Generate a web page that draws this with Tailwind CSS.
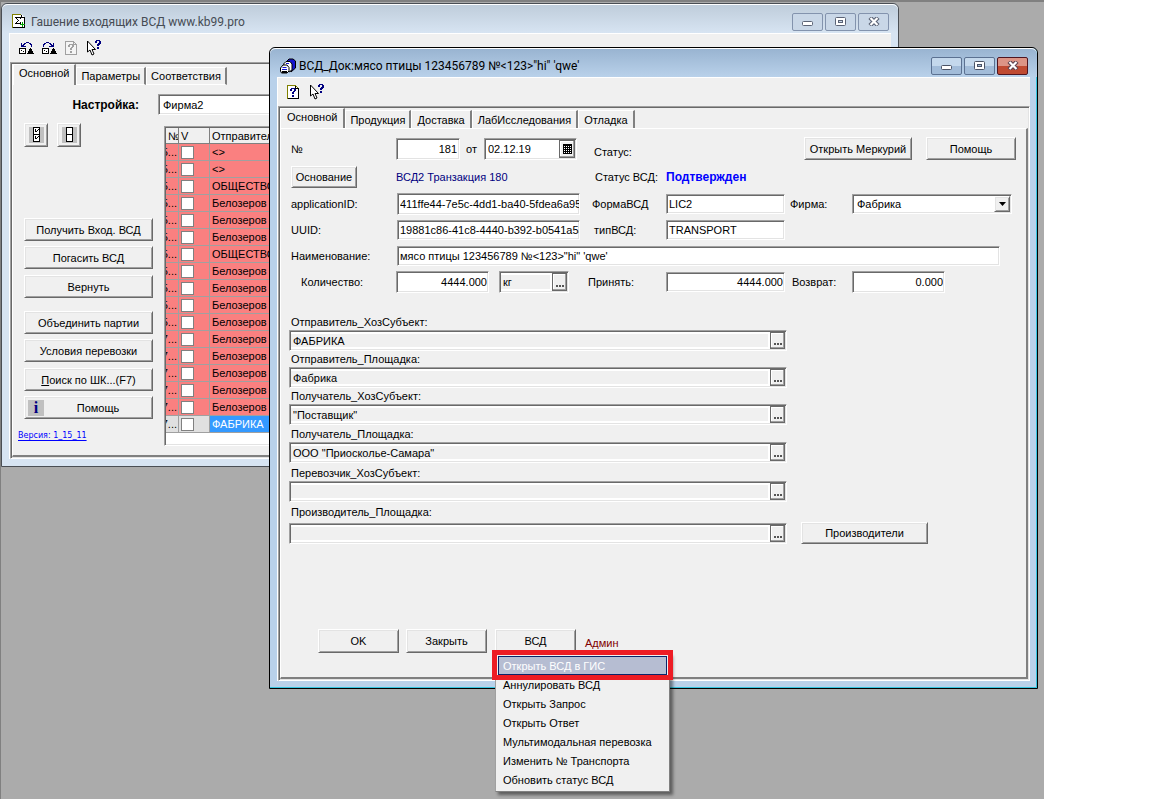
<!DOCTYPE html>
<html lang="ru">
<head>
<meta charset="utf-8">
<title>Гашение входящих ВСД</title>
<script src="https://cdn.jsdelivr.net/npm/@tailwindcss/browser@4"></script>
</head>
<body class="bg-white font-['Liberation_Sans',sans-serif] text-[11px] leading-4 text-black
 [&_.raised]:border [&_.raised]:border-t-white [&_.raised]:border-l-white [&_.raised]:border-r-[#696969] [&_.raised]:border-b-[#696969] [&_.raised]:bg-[#f0f0f0] [&_.raised]:shadow-[inset_1px_1px_#e3e3e3,inset_-1px_-1px_#a0a0a0]
 [&_.sunken]:border [&_.sunken]:border-t-[#a0a0a0] [&_.sunken]:border-l-[#a0a0a0] [&_.sunken]:border-r-white [&_.sunken]:border-b-white [&_.sunken]:shadow-[inset_1px_1px_#696969,inset_-1px_-1px_#e3e3e3]
 [&_.tab]:h-[18px] [&_.tab]:border-t [&_.tab]:border-r-2 [&_.tab]:border-t-white [&_.tab]:border-r-[#808080] [&_.tab]:border-l [&_.tab]:border-l-white [&_.tab]:px-1 [&_.tab]:whitespace-nowrap
 [&_.dots]:relative [&_.dots]:flex [&_.dots]:w-[15px] [&_.dots]:items-end [&_.dots]:justify-center [&_.dots]:gap-px [&_.dots]:border [&_.dots]:border-[#696969] [&_.dots]:pb-[3px] [&_.dots]:shadow-[inset_-1px_-1px_#a0a0a0,inset_1px_1px_#fff] [&_.dots]:bg-[#f0f0f0] [&_.dots>i]:h-0.5 [&_.dots>i]:w-0.5 [&_.dots>i]:bg-[#555]
 [&_.cap]:flex [&_.cap]:h-[18px] [&_.cap]:w-[31px] [&_.cap]:items-center [&_.cap]:justify-center [&_.cap]:rounded-[2px] [&_.cap]:border">
<main class="relative mr-[108px] min-h-screen overflow-hidden border-t-2 border-l border-t-[#808080] border-l-[#808080] bg-[#ababab]">

  <!-- Parent window -->
  <section class="absolute top-px left-0 w-[898px] rounded-t-md border border-[#4a4e54] bg-[#d7e4f2] px-[7px] pb-[7px]">
    <header class="-mx-[7px] flex h-[29px] items-center rounded-t-md border-t border-white bg-linear-to-b from-[#bfcddb] to-[#d7e4f2] pt-[5px] pr-[9px] pl-[10px]">
      <svg class="mr-[5px] h-[15px] w-[14px]" viewBox="0 0 14 15" shape-rendering="crispEdges"><path d="M.5.5h9l3 3v10H.5z" fill="#fff"/><path d="M9 .5H.5v13" fill="none" stroke="#808000"/><path d="M9.500.5v3h3v10H1" fill="none" stroke="#000"/><path d="M3 3h6v2H8V4H5v1h1v1h1v1H6v1H5v1h3V8h1v2H3V9h1V8h1V7h1V6H5V5H4V4H3z" fill="#000"/><path d="M8 10.500h5M10.500 8v5" stroke="#00a000"/></svg>
      <h1 class="flex-1 font-[Roboto,sans-serif] text-[12px] text-[#464c55]">Гашение входящих ВСД www.kb99.pro</h1>
      <div class="flex gap-[2px]">
        <button class="cap border-[#8393ad] bg-[#c9d7e7]" aria-label="Свернуть"><svg width="12" height="6" class="mt-[5px]"><rect x=".5" y=".5" width="10" height="4" rx="1" fill="#fff" stroke="#5b6375"/></svg></button>
        <button class="cap border-[#8393ad] bg-[#c9d7e7]" aria-label="Развернуть"><svg width="11" height="9"><rect x=".5" y=".5" width="10" height="8" rx="1" fill="#fff" stroke="#5b6375"/><rect x="3.500" y="3.500" width="4" height="2" fill="#c9d7e7" stroke="#5b6375"/></svg></button>
        <button class="cap border-[#8393ad] bg-[#c9d7e7]" aria-label="Закрыть"><svg width="12" height="9" viewBox="0 0 12 9"><path d="M2 .5l8 8M10 .5l-8 8" stroke="#5b6375" stroke-width="4.400"/><path d="M2.500 1l7 7M9.500 1l-7 7" stroke="#fff" stroke-width="2.200"/></svg></button>
      </div>
    </header>
    <div class="border-t border-l border-white bg-[#f0f0f0]">
      <div class="flex h-7 items-center gap-[8px] pl-[9px]">
        <button aria-label="Назад"><svg width="15" height="13" viewBox="0 0 15 13" shape-rendering="crispEdges"><path d="M2 1h1v2h1V2h1V1h2V0h3v1h2v1h1v3h-1V3h-1V2h-1V1H7v1H6v1H5v1h2v1H2z" fill="#000080"/><rect x=".5" y="6.500" width="6" height="5" fill="#fff" stroke="#000"/><path d="M2 8h1v1H2zM4 9h1v1H4zM11 6h1v1h1v2h1v2h1v1H8v-1h1V9h1V7h1z"/></svg></button>
        <button aria-label="Вперёд"><svg width="15" height="13" viewBox="0 0 15 13" shape-rendering="crispEdges"><path d="M12 1h-1v2h-1V2H9V1H7V0H4v1H2v1H1v3h1V3h1V2h1V1h3v1h1v1h1v1H7v1h5z" fill="#000080"/><rect x=".5" y="6.500" width="6" height="5" fill="#fff" stroke="#000"/><path d="M2 8h1v1H2zM4 9h1v1H4zM11 6h1v1h1v2h1v2h1v1H8v-1h1V9h1V7h1z"/></svg></button>
        <button aria-label="Справка"><svg width="13" height="15" viewBox="0 0 13 15" shape-rendering="crispEdges"><path d="M.5.5h8l3 3v10H.5zM8.500.5v3h3" fill="#f4f4f4" stroke="#a0a0a0"/><path d="M3 4h1V3h4v1h1v2H8v1H7v2H5V7h1V6h1V4H5v2H3zM5 10h2v2H5z" fill="#a0a0a0"/></svg></button>
        <button aria-label="Что это?"><svg width="16" height="16" viewBox="0 0 16 16"><path d="M1.500 1v11l2.500-2 2 5 2-1-2-4.500h3.500z" fill="#fff" stroke="#000"/><path d="M9 1h1V0h4v1h1v3h-1v1h-1v1h-2V4h1V3h1V1h-2v2H9zM11 7h2v2h-2z" fill="#000080"/></svg></button>
      </div>
      <div class="sunken p-px">
        <div class="border-r-2 border-b-2 border-l border-r-[#808080] border-b-[#808080] border-l-white pb-[9px]">
          <nav class="flex h-[21px] items-end">
            <button class="tab !h-[21px] !px-[5px] pb-1">Основной</button>
            <button class="tab border-b border-b-white">Параметры</button>
            <button class="tab border-b border-b-white">Соответствия</button>
          </nav>
          <div class="mt-[9px] flex items-center">
            <label for="cfg" class="w-[145px] pr-[19px] text-right text-[12px] font-bold">Настройка:</label>
            <input id="cfg" value="Фирма2" class="sunken h-[21px] w-[400px] bg-white px-1">
          </div>
          <div class="mt-[11px] flex">
            <div class="flex w-[151px] flex-col items-start pl-[11px] [&>button]:h-[23px] [&>button]:w-[129px]">
              <div class="mt-[-3px] mb-[71px] flex gap-[9px]">
                <button class="raised flex h-6 w-6 items-center justify-center" aria-label="Отметить все"><svg width="15" height="16" shape-rendering="crispEdges"><path fill="#c0c0c0" d="M0 0h15v16H0z"/><path d="M4.500.5h6v14h-6zM4 7.500h7" fill="#fff" stroke="#000"/><path d="M6 2h1v2h1V3h1V2h1v1H9v1H8v1H6zM6 9h1v2h1v-1h1V9h1v1H9v1H8v1H6z"/></svg></button>
                <button class="raised flex h-6 w-6 items-center justify-center" aria-label="Снять отметки"><svg width="15" height="16" shape-rendering="crispEdges"><path fill="#c0c0c0" d="M0 0h15v16H0z"/><path d="M4.500.5h6v14h-6zM4 7.500h7" fill="#fff" stroke="#000"/></svg></button>
              </div>
              <button class="raised mb-[5px]">Получить Вход. ВСД</button>
              <button class="raised mb-[6px]">Погасить ВСД</button>
              <button class="raised mb-[13px]">Вернуть</button>
              <button class="raised mb-[5px]">Объединить партии</button>
              <button class="raised mb-[6px]">Условия перевозки</button>
              <button class="raised mb-[5px]"><u>П</u>оиск по ШК...(F7)</button>
              <button class="raised flex items-center pl-[3px]"><span class="flex h-4 w-4 items-center justify-center bg-[#c0c0c0] font-['Liberation_Serif',serif] text-[16px] font-bold text-[#000080]">i</span><span class="flex-1">Помощь</span></button>
              <a href="#" class="mt-[9px] -ml-[6px] font-['DejaVu_Sans',sans-serif] text-[8px] text-[#0000ff] underline underline-offset-2">Версия: 1_15_11</a>
            </div>
            <div class="sunken h-[320px] flex-1 overflow-hidden bg-white p-px">
              <table class="w-full table-fixed border-separate border-spacing-0 [&_td]:h-[17px] [&_td]:border-r [&_td]:border-b [&_td]:border-[#a0a0a0] [&_td]:p-0 [&_th]:h-4 [&_th]:border-r [&_th]:border-b [&_th]:border-[#808080] [&_th]:bg-[#f0f0f0] [&_th]:p-0 [&_th]:text-left [&_th]:font-normal">
                <colgroup><col class="w-[13px]"><col class="w-[31px]"><col></colgroup>
                <thead><tr><th><div class="h-[15px] w-3 overflow-hidden pl-0.5">№</div></th><th><div class="h-[15px] pl-0.5">V</div></th><th><div class="h-[15px] pl-0.5">Отправитель</div></th></tr></thead>
                <tbody id="rows"></tbody>
              </table>
            </div>
          </div>
        </div>
      </div>
    </div>
  </section>

  <!-- Document window -->
  <section class="absolute top-[45px] left-[268px] w-[769px] rounded-t-md border border-black bg-[#b9d1ea] shadow-[inset_-1px_-1px_#35c5e0]">
    <header class="flex h-[29px] items-center rounded-t-md border-t border-white bg-linear-to-b from-[#99b4d1] to-[#b9d1ea] pt-[5px] pr-[9px] pl-[10px]">
      <svg class="mr-[3px] h-4 w-4" viewBox="0 0 16 16"><path d="M7 3l2-2h4l2.500 2v7L11 14l-2-4z" fill="#1414d0" stroke="#000"/><path d="M3.500 6L6 3.500h4l2 2.500v6l-3 2-3-4z" fill="#fff" stroke="#000"/><path d="M.5 10L3 7h4l2 2.500V13l-2 2H1.500L.5 13z" fill="#fff" stroke="#000"/><path d="M2.500 9.500h4M2 11.500h5M6 5.500h3M10 3h3" stroke="#1414d0"/><path d="M2 14h5" stroke="#000" stroke-width="2"/></svg>
      <h2 class="flex-1 font-[Roboto,sans-serif] text-[12px]">ВСД_Док:мясо птицы 123456789 №&lt;123&gt;"hi" 'qwe'</h2>
      <div class="flex gap-[2px]">
        <button class="cap border-[#5b7191] bg-linear-to-b from-[#c4d8ec] from-50% to-[#a2bcd9] to-50%" aria-label="Свернуть"><svg width="12" height="6" class="mt-[5px]"><rect x=".5" y=".5" width="10" height="4" rx="1" fill="#fff" stroke="#4b5365"/></svg></button>
        <button class="cap border-[#5b7191] bg-linear-to-b from-[#c4d8ec] from-50% to-[#a2bcd9] to-50%" aria-label="Развернуть"><svg width="11" height="9"><rect x=".5" y=".5" width="10" height="8" rx="1" fill="#fff" stroke="#4b5365"/><rect x="3.500" y="3.500" width="4" height="2" fill="#a2bcd9" stroke="#4b5365"/></svg></button>
        <button class="cap border-[#4f1520] bg-linear-to-b from-[#dc9486] from-50% to-[#bf4a32] to-50%" aria-label="Закрыть"><svg width="12" height="9" viewBox="0 0 12 9"><path d="M2 .5l8 8M10 .5l-8 8" stroke="#5b4350" stroke-width="4.400"/><path d="M2.500 1l7 7M9.500 1l-7 7" stroke="#fff" stroke-width="2.200"/></svg></button>
      </div>
    </header>
    <div class="mx-[7px] mb-[7px] border-t border-l border-white bg-[#f0f0f0]">
      <div class="flex h-7 items-center gap-[9px] pl-[9px]">
        <button aria-label="Справка"><svg width="13" height="15" viewBox="0 0 13 15" shape-rendering="crispEdges"><path d="M.5.5h8l3 3v10H.5z" fill="#fff" stroke="#808000"/><path d="M8.500.5v3h3v10H1" fill="none" stroke="#000"/><path d="M3 4h1V3h4v1h1v2H8v1H7v2H5V7h1V6h1V4H5v2H3zM5 10h2v2H5z" fill="#000080"/></svg></button>
        <button aria-label="Что это?"><svg width="16" height="16" viewBox="0 0 16 16"><path d="M1.500 1v11l2.500-2 2 5 2-1-2-4.500h3.500z" fill="#fff" stroke="#000"/><path d="M9 1h1V0h4v1h1v3h-1v1h-1v1h-2V4h1V3h1V1h-2v2H9zM11 7h2v2h-2z" fill="#000080"/></svg></button>
      </div>
      <div class="sunken p-px">
        <nav class="flex h-5 items-end">
          <button class="tab !h-5 !px-[6px] pb-1">Основной</button>
          <button class="tab">Продукция</button>
          <button class="tab !px-[5px]">Доставка</button>
          <button class="tab !px-[5px]">ЛабИсследования</button>
          <button class="tab !px-[5px]">Отладка</button>
        </nav>
        <form class="border-t border-r-2 border-b-2 border-l border-t-white border-r-[#808080] border-b-[#808080] border-l-white pt-[5px] pr-[8px] pb-6 pl-[10px]" onsubmit="return false">
          <div class="grid grid-cols-[105px_196px_74px_124px_62px_1fr] grid-rows-[29px_28px_26px_25px_27px_26px] items-center">
            <label for="num">№</label>
            <div class="flex items-center">
              <input id="num" value="181" class="sunken mr-[6px] h-[22px] w-16 bg-white pr-0.5 text-right">
              <label for="date" class="w-[18px]">от</label>
              <div class="sunken flex h-[22px] w-[93px] bg-white p-px">
                <input id="date" value="02.12.19" class="min-w-0 flex-1 pl-0.5">
                <button class="flex w-4 items-center justify-center border border-[#696969] bg-[#f0f0f0] shadow-[inset_-1px_-1px_#a0a0a0,inset_1px_1px_#fff]" aria-label="Календарь"><svg width="9" height="10" shape-rendering="crispEdges"><path d="M0 0h9v10H0z"/><path d="M1 2h1v1H1zM3 2h1v1H3zM5 2h1v1H5zM7 2h1v1H7zM1 4h1v1H1zM3 4h1v1H3zM5 4h1v1H5zM7 4h1v1H7zM1 6h1v1H1zM3 6h1v1H3zM5 6h1v1H5zM7 6h1v1H7zM1 8h1v1H1zM3 8h1v1H3zM5 8h1v1H5zM7 8h1v1H7z" fill="#fff"/></svg></button>
              </div>
            </div>
            <span class="pt-[6px] pl-[2px]">Статус:</span><span></span>
            <div class="col-span-2 flex justify-end gap-[14px] pr-[2px]">
              <button class="raised h-[23px] w-[108px] whitespace-nowrap">Открыть Меркурий</button>
              <button class="raised h-[23px] w-[90px]">Помощь</button>
            </div>

            <button class="raised h-[22px] w-[66px]">Основание</button>
            <span class="text-[#000080]">ВСД2 Транзакция 180</span>
            <span class="pl-[3px] whitespace-nowrap">Статус ВСД:</span>
            <span class="col-span-3 text-[12px] font-bold text-[#0000ff]">Подтвержден</span>

            <label for="app">applicationID:</label>
            <input id="app" value="411ffe44-7e5c-4dd1-ba40-5fdea6a95b10" class="sunken ml-px h-[22px] w-[183px] bg-white pl-0.5">
            <label for="form" class="w-[57px] overflow-hidden whitespace-nowrap">ФормаВСД:</label>
            <input id="form" value="LIC2" class="sunken h-5 w-[119px] bg-white px-0.5">
            <label for="firm">Фирма:</label>
            <div class="sunken relative h-5 w-[160px] bg-white">
              <select id="firm" class="h-full w-full appearance-none pl-1"><option>Фабрика</option></select>
              <span class="raised pointer-events-none absolute inset-y-px right-px flex w-4 items-center justify-center"><svg width="7" height="4"><path d="M0 0h7L3.500 4z"/></svg></span>
            </div>

            <label for="uuid">UUID:</label>
            <input id="uuid" value="19881c86-41c8-4440-b392-b0541a53c7e2" class="sunken ml-px h-5 w-[183px] bg-white pl-0.5">
            <label for="type" class="pl-[2px]">типВСД:</label>
            <input id="type" value="TRANSPORT" class="sunken h-5 w-[119px] bg-white px-0.5">
            <span class="col-span-2"></span>

            <label for="name">Наименование:</label>
            <input id="name" value="мясо птицы 123456789 №&lt;123&gt;&quot;hi&quot; 'qwe'" class="sunken col-span-5 mr-[18px] ml-px h-5 bg-white px-0.5">

            <label for="qty" class="pl-[10px]">Количество:</label>
            <div class="flex">
              <input id="qty" value="4444.000" class="sunken mr-[10px] h-[22px] w-[93px] bg-white pr-px text-right">
              <div class="sunken flex h-[22px] w-[70px] bg-white p-px">
                <input aria-label="Единица" value="кг" class="min-w-0 flex-1 border-2 border-l-0 border-white bg-[#f0f0f0] pl-0.5">
                <button class="dots" aria-label="Выбрать"><i></i><i></i><i></i></button>
              </div>
            </div>
            <label for="acc" class="-ml-1">Принять:</label>
            <input id="acc" value="4444.000" class="sunken h-5 w-[119px] bg-white pr-px text-right">
            <label for="ret" class="pl-[2px]">Возврат:</label>
            <input id="ret" value="0.000" class="sunken h-[22px] w-[93px] bg-white pr-px text-right">
          </div>

          <div class="mt-[19px] -ml-[2px] flex items-end gap-[14px]">
            <div id="lookups" class="flex w-[498px] flex-col"></div>
            <button class="raised h-[22px] w-[127px]">Производители</button>
          </div>

          <div class="mt-[85px] ml-[27px] flex items-center gap-[7px]">
            <button class="raised h-6 w-[81px]">OK</button>
            <button class="raised h-6 w-[81px]">Закрыть</button>
            <div class="relative ml-px">
              <button class="raised h-6 w-[81px]">ВСД</button>
              <menu class="absolute top-6 left-0 z-10 w-[175px] border border-t-[#a0a0a0] border-r-[#808080] border-b-[#808080] border-l-[#a0a0a0] bg-[#f0f0f0] p-0.5 shadow-[3px_3px_3px_rgba(0,0,0,0.45)] [&_button]:block [&_button]:h-[19px] [&_button]:w-full [&_button]:pl-[5px] [&_button]:text-left">
                <li><button class="relative border border-[#0a246a] bg-[#b6bdd2] !pl-1 text-white">Открыть ВСД в ГИС<span class="absolute -top-[7px] -right-[7px] -bottom-[6px] -left-[7px] border-[5px] border-[#ed1c24]"></span></button></li>
                <li><button>Аннулировать ВСД</button></li>
                <li><button>Открыть Запрос</button></li>
                <li><button>Открыть Ответ</button></li>
                <li><button>Мультимодальная перевозка</button></li>
                <li><button>Изменить № Транспорта</button></li>
                <li><button>Обновить статус ВСД</button></li>
              </menu>
            </div>
            <span class="pt-1 pl-[2px] text-[#800000]">Админ</span>
          </div>
        </form>
      </div>
    </div>
  </section>
</main>
<script>
const B = 'Белозеров', O = 'ОБЩЕСТВО С ОГРАНИЧЕННОЙ';
const names = ['<>', '<>', O, B, B, B, O, B, B, B, B, B, B, B, B, B, 'ФАБРИКА'];
const esc = s => s.replace(/</g, '&lt;').replace(/"/g, '&quot;');
document.getElementById('rows').innerHTML = names.map((n, i) => {
  const last = i === names.length - 1;
  return `<tr class="${last ? 'bg-[#e0e0e0]' : 'bg-[#fa8080]'}">
    <td><div class="flex h-4 w-[11px] justify-end overflow-hidden">${i < 11 ? '5' : '7'}...</div></td>
    <td><input type="checkbox" aria-label="Отметить" class="ml-0.5 block h-[13px] w-[13px] appearance-none border border-[#808080] bg-white"></td>
    <td class="${last ? 'bg-[#3399ff] text-white' : ''}"><div class="h-4 overflow-hidden pl-0.5 whitespace-nowrap">${esc(n)}</div></td></tr>`;
}).join('');
const fields = [
  ['Отправитель_ХозСубъект:', 'ФАБРИКА', ''],
  ['Отправитель_Площадка:', 'Фабрика', ''],
  ['Получатель_ХозСубъект:', '"Поставщик"', ''],
  ['Получатель_Площадка:', 'ООО "Приосколье-Самара"', 'mt-px'],
  ['Перевозчик_ХозСубъект:', '', 'mt-[2px]'],
  ['Производитель_Площадка:', '', 'mt-[2px] pb-[3px]'],
];
document.getElementById('lookups').innerHTML = fields.map(([l, v, c], i) => `
  <label for="f${i}" class="pl-[2px] ${c}">${l}</label>
  <div class="sunken flex h-[21px] bg-white p-px">
    <input id="f${i}" value="${esc(v)}" readonly class="min-w-0 flex-1 border-2 border-l-0 border-white bg-[#f0f0f0] pl-0.5">
    <button class="dots" aria-label="Выбрать"><i></i><i></i><i></i></button>
  </div>`).join('');
</script>
</body>
</html>
